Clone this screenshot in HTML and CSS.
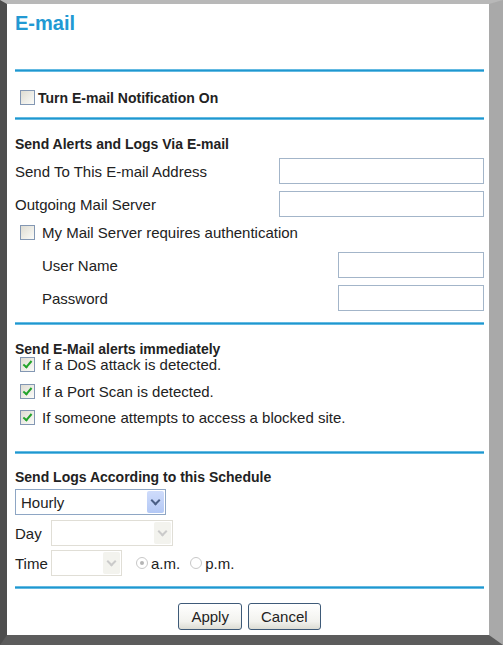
FILE: index.html
```html
<!DOCTYPE html>
<html lang="en">
<head>
    <meta charset="UTF-8">
    <title>E-mail</title>
    <link rel="stylesheet" href="styles.css">
</head>
<body>
    <div class="frame">
        <div class="content">
            <h1 class="title">E-mail</h1>
            <div class="rule"></div>

            <!-- Notification switch -->
            <label class="notify"><input type="checkbox" class="cb"> Turn E-mail Notification On</label>
            <div class="rule rule-notify"></div>

            <!-- Mail settings -->
            <h2 class="heading">Send Alerts and Logs Via E-mail</h2>
            <div class="field first">
                <span>Send To This E-mail Address</span>
                <input type="text" class="txt wide">
            </div>
            <div class="field">
                <span>Outgoing Mail Server</span>
                <input type="text" class="txt wide">
            </div>
            <label class="check auth"><input type="checkbox" class="cb"> My Mail Server requires authentication</label>
            <div class="field user">
                <span class="indent">User Name</span>
                <input type="text" class="txt narrow">
            </div>
            <div class="field">
                <span class="indent">Password</span>
                <input type="password" class="txt narrow">
            </div>
            <div class="rule rule-mail"></div>

            <!-- Alerts -->
            <h2 class="heading">Send E-Mail alerts immediately</h2>
            <div class="alerts">
                <label class="check"><input type="checkbox" class="cb" checked> If a DoS attack is detected.</label>
                <label class="check"><input type="checkbox" class="cb" checked> If a Port Scan is detected.</label>
                <label class="check"><input type="checkbox" class="cb" checked> If someone attempts to access a blocked site.</label>
            </div>
            <div class="rule rule-alerts"></div>

            <!-- Schedule -->
            <h2 class="heading heading-sched">Send Logs According to this Schedule</h2>
            <div class="sched-row first">
                <span class="sel sel-freq">
                    <select>
                        <option>Hourly</option>
                        <option>Daily</option>
                        <option>Weekly</option>
                        <option>When log is full</option>
                        <option>None</option>
                    </select>
                    <span class="arrow"></span>
                </span>
            </div>
            <div class="sched-row day">
                <span class="sched-label">Day</span>
                <span class="sel sel-day disabled">
                    <select disabled><option></option></select>
                    <span class="arrow"></span>
                </span>
            </div>
            <div class="sched-row">
                <span class="sched-label">Time</span>
                <span class="sel sel-time disabled">
                    <select disabled><option></option></select>
                    <span class="arrow"></span>
                </span>
                <label class="radio am"><input type="radio" name="ampm" class="rb" checked disabled> a.m.</label>
                <label class="radio"><input type="radio" name="ampm" class="rb" disabled> p.m.</label>
            </div>
            <div class="rule rule-sched"></div>

            <div class="buttons">
                <button type="button">Apply</button>
                <button type="button">Cancel</button>
            </div>
        </div>
    </div>
</body>
</html>
```

FILE: styles.css
```css
body {
    margin: 0;
    font-family: Arial, "Liberation Sans", sans-serif;
    color: #222;
    background: #fff;
}

/* Window frame */
.frame {
    width: 503px;
    height: 645px;
    box-sizing: border-box;
    border-style: solid;
    border-width: 4px 14px 10px 7px;
    border-color: #b8b8b8 #a9a9a9 #5c5c5c #4e4e4e;
    overflow: hidden;
}

.content {
    padding: 0 5px 0 8px;
    font-size: 15px;
}

.title {
    margin: 0;
    padding-top: 7px;
    height: 58px;
    font-size: 20px;
    line-height: 24px;
    font-weight: bold;
    color: #2299d3;
}

.rule {
    height: 3px;
    background: linear-gradient(#86cbeb, #1f97cf 50%, #86cbeb);
}

.rule-mail { margin-top: 11px; }
.rule-alerts { margin-top: 26px; }
.rule-sched { margin-top: 10px; }

.heading {
    margin: 16px 0 0;
    font-size: 14px;
    line-height: 16px;
    font-weight: bold;
}

.heading-sched { margin-top: 15px; }

/* Checkboxes */
.cb {
    appearance: none;
    margin: 0;
    width: 15px;
    height: 15px;
    flex: none;
    position: relative;
    border: 1px solid #8397b3;
    background: linear-gradient(135deg, #dedcd2, #fbfbf8);
    box-sizing: border-box;
}

.cb:checked::after {
    content: "";
    position: absolute;
    left: 4px;
    top: 1px;
    width: 3px;
    height: 7px;
    border-right: 2px solid #22a32a;
    border-bottom: 2px solid #22a32a;
    transform: rotate(40deg);
}

.notify {
    display: flex;
    align-items: center;
    gap: 3px;
    height: 15px;
    margin: 18px 0 12px;
    padding-left: 5px;
    font-size: 14px;
    font-weight: bold;
}

.check {
    display: flex;
    align-items: center;
    gap: 7px;
    height: 15px;
    padding-left: 5px;
}

.check.auth {
    height: 17px;
    margin-top: 7px;
}

.alerts .check + .check { margin-top: 11.5px; }

/* Text fields */
.field {
    display: flex;
    align-items: center;
    justify-content: space-between;
    height: 26px;
    margin-top: 7px;
}

.field.first { margin-top: 6px; }
.field.user { margin-top: 11px; }

.indent { padding-left: 27px; }

.txt {
    height: 26px;
    box-sizing: border-box;
    border: 1px solid #a3b5c9;
    margin: 0;
    padding: 2px 4px;
    font: inherit;
}

.wide { width: 205px; }
.narrow { width: 146px; }

/* Schedule */
.sched-row {
    display: flex;
    align-items: center;
    height: 26px;
    margin-top: 4px;
}

.sched-row.day { margin-top: 5px; }

.sched-label { width: 36px; }

.sel {
    position: relative;
    display: inline-block;
    height: 26px;
}

.sel select {
    appearance: none;
    width: 100%;
    height: 100%;
    box-sizing: border-box;
    margin: 0;
    padding: 0 0 0 5px;
    border: 1px solid #8ea6c4;
    background: #fff;
    font: inherit;
    color: #222;
}

.sel-freq { width: 151px; }
.sel-day { width: 122px; }
.sel-time { width: 71px; }

.arrow {
    position: absolute;
    top: 2px;
    right: 2px;
    bottom: 2px;
    width: 17px;
    background: linear-gradient(#cfdcfb, #b3c8f5);
    border-radius: 2px;
}

.arrow::after {
    content: "";
    position: absolute;
    left: 5px;
    top: 6px;
    width: 5px;
    height: 5px;
    border-right: 2px solid #4a5f86;
    border-bottom: 2px solid #4a5f86;
    transform: rotate(45deg);
}

.sel.disabled select {
    border-color: #d3d1c6;
    background: #fff;
}

.sel.disabled .arrow {
    background: #f3f3ee;
}

.sel.disabled .arrow::after {
    border-color: #cacaca;
}

/* Radios */
.radio {
    display: flex;
    align-items: center;
    gap: 3px;
    margin-left: 10px;
    color: #222;
}

.radio.am { margin-left: 14px; }

.rb {
    appearance: none;
    margin: 0;
    width: 12px;
    height: 12px;
    border: 1px solid #c8c8c8;
    border-radius: 50%;
    background: #fff;
    position: relative;
    box-sizing: border-box;
}

.rb:checked::after {
    content: "";
    position: absolute;
    left: 3px;
    top: 3px;
    width: 4px;
    height: 4px;
    border-radius: 50%;
    background: #b5b5b5;
}

/* Buttons */
.buttons {
    display: flex;
    justify-content: center;
    gap: 6px;
    margin-top: 14px;
}

button {
    height: 27px;
    padding: 0 12px;
    border: 1px solid #3e5a78;
    border-radius: 3px;
    background: linear-gradient(#ffffff, #f2f2ee 70%, #dcdcd4);
    font: 15px Arial, "Liberation Sans", sans-serif;
    color: #222;
    cursor: pointer;
}
```
